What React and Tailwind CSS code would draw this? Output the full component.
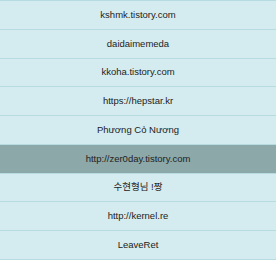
const links = [
  "kshmk.tistory.com",
  "daidaimemeda",
  "kkoha.tistory.com",
  "https://hepstar.kr",
  "Phương Cỏ Nương",
  "http://zer0day.tistory.com",
  "수현형님 !짱",
  "http://kernel.re",
  "LeaveRet",
];

const ACTIVE = 5;

export default function App() {
  return (
    <div
      className="w-[276px] h-[260px] overflow-hidden bg-[#d4ecef] border-t border-[#b6dce1]"
      style={{ fontFamily: '"Liberation Sans", Arial, "Noto Sans CJK KR", sans-serif' }}
    >
      {links.map((name, i) => (
        <div
          key={name}
          className={`flex h-[28.75px] items-center justify-center border-b border-[#b6dce1] text-[9.5px] text-[#222] ${
            i === ACTIVE ? "bg-[#8ca8a9]" : "bg-[#d4ecef]"
          }`}
        >
          {name}
        </div>
      ))}
    </div>
  );
}
